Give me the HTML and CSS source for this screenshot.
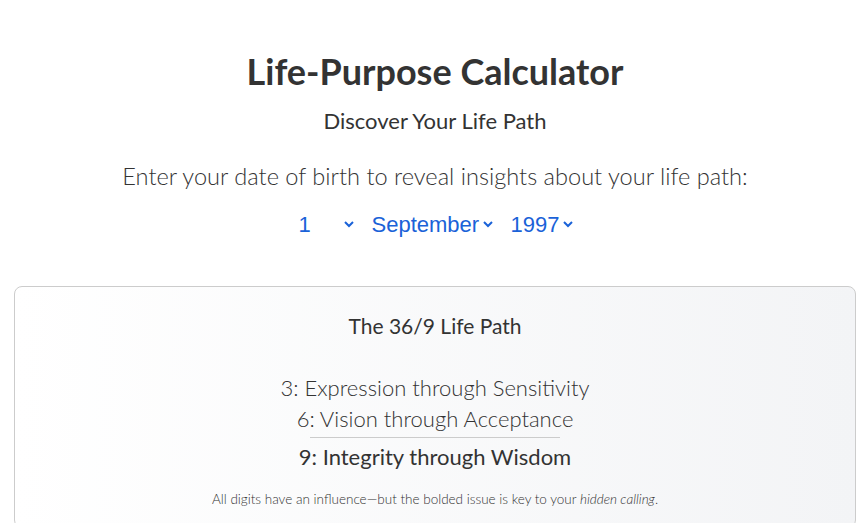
FILE: index.html
```html
<!DOCTYPE html>
<html lang="en">

<head>
    <meta charset="UTF-8">
    <meta name="viewport" content="width=device-width, initial-scale=1.0">
    <title>Life-Purpose Calculator</title>
    <link rel="stylesheet" href="styles.css">
</head>

<body>
    <h1>Life-Purpose Calculator</h1>
    <h2 class="subtitle">Discover Your Life Path</h2>

    <p class="intro">Enter your date of birth to reveal insights about your life path:</p>

    <div class="date-picker">
        <select id="day" class="day-select">
            <option>1</option>
        </select>
        <select id="month" class="month-select">
            <option>September</option>
        </select>
        <select id="year" class="year-select">
            <option>1997</option>
        </select>
    </div>

    <div class="result-card">
        <h3 class="path-title">The 36/9 Life Path</h3>
        <div class="digits">
            <p class="digit">3: Expression through Sensitivity</p>
            <p class="digit">6: Vision through Acceptance</p>
            <div class="divider"></div>
            <p class="digit digit-key">9: Integrity through Wisdom</p>
        </div>
        <p class="note">All digits have an influence—but the bolded issue is key to your <em>hidden calling</em>.</p>
    </div>
</body>

</html>
```

FILE: styles.css
```css
body {
    font-family: Lato, "Open Sans", sans-serif;
    color: #333;
    margin: 0;
    padding: 0 12px 0 14px;
    text-align: center;
}

h1 {
    font-size: 36px;
    font-weight: bold;
    margin: 49px 0 0;
}

.subtitle {
    font-size: 22px;
    font-weight: normal;
    margin: 14px 0 0;
}

.intro {
    font-size: 23.6px;
    font-weight: 300;
    margin: 28px 0 0;
}

.date-picker {
    margin-top: 21px;
    display: flex;
    justify-content: center;
    gap: 11px;
}

.date-picker select {
    font-family: "Liberation Sans", Arial, sans-serif;
    font-size: 22px;
    color: #1a62d8;
    border: none;
    background: transparent;
}

.day-select {
    width: 62px;
}

.result-card {
    margin-top: 48px;
    border: 1px solid #ccc;
    border-radius: 8px;
    background: linear-gradient(to right, #ffffff, #f3f4f6);
    padding: 26px 20px 20px;
}

.path-title {
    font-size: 21px;
    font-weight: normal;
    margin: 0;
}

.digits {
    margin-top: 34px;
    display: flex;
    flex-direction: column;
    align-items: center;
}

.digit {
    font-size: 22px;
    font-weight: 300;
    margin: 0;
    line-height: 31px;
}

.divider {
    width: 250px;
    border-top: 1px solid #ccc;
    margin: 3px 0 3px;
}

.digit-key {
    font-weight: normal;
}

.note {
    font-size: 13.5px;
    font-weight: 300;
    margin: 19px 0 0;
}
```
